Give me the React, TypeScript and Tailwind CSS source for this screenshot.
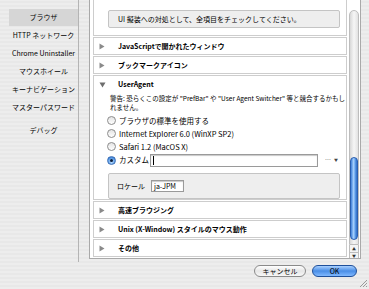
const font = "font-['Noto_Sans_CJK_JP','Noto_Sans',sans-serif]"

function TriRight() {
  return (
    <svg width="6" height="7" viewBox="0 0 6 7" className="shrink-0">
      <path d="M0.5 0.5 L5.5 3.5 L0.5 6.5 Z" fill="#8a8a8a" />
    </svg>
  )
}

function TriDown() {
  return (
    <svg width="7" height="6" viewBox="0 0 7 6" className="shrink-0">
      <path d="M0.5 0.5 L6.5 0.5 L3.5 5.5 Z" fill="#6e6e6e" />
    </svg>
  )
}

function Radio({ checked }: { checked?: boolean }) {
  if (checked) {
    return (
      <span className="flex h-[9px] w-[9px] shrink-0 items-center justify-center rounded-full border border-[#3b6fb6] bg-[radial-gradient(circle_at_50%_70%,#bfe0ff_0%,#5a9be6_60%,#2d6cc4_100%)]">
        <span className="h-[3px] w-[3px] rounded-full bg-[#0d1f3c]" />
      </span>
    )
  }
  return (
    <span className="h-[9px] w-[9px] shrink-0 rounded-full border border-[#8c8c8c] bg-[linear-gradient(180deg,#e4e4e4,#ffffff)]" />
  )
}

function Row({ label }: { label: string }) {
  return (
    <div className="flex h-[18px] items-center border border-[#cdcdcd] bg-white pl-[5px]">
      <TriRight />
      <span className="ml-[13px] whitespace-nowrap text-[7px] font-bold leading-none">{label}</span>
    </div>
  )
}

const sideItems = ['HTTP ネットワーク', 'Chrome Uninstaller', 'マウスホイール', 'キーナビゲーション', 'マスターパスワード']

export default function App() {
  return (
    <div
      className={`relative h-[289px] w-[369px] overflow-hidden bg-[#ececec] bg-[repeating-linear-gradient(0deg,#ededed_0px,#ededed_2px,#e8e8e8_2px,#e8e8e8_4px)] text-black ${font}`}
    >
      <div className="flex h-[262px]">
        {/* Sidebar */}
        <div className="flex w-[79px] shrink-0 flex-col border-r border-[#b4b4b4] pl-[9px] pt-[9px]">
          <div className="flex h-[17px] items-center justify-center bg-[#d6d6d6] text-[7px] leading-none">ブラウザ</div>
          {sideItems.map((s) => (
            <div key={s} className="flex h-[18px] items-center justify-center whitespace-nowrap text-[7px] leading-none">
              {s}
            </div>
          ))}
          <div className="mt-[5px] flex h-[18px] items-center justify-center text-[7px] leading-none">デバッグ</div>
        </div>

        {/* Main panel */}
        <div className="ml-[10px] flex h-[259px] w-[272px] border-x border-b border-[#a9a9a9] bg-white">
          <div className="flex w-[257px] shrink-0 flex-col gap-[1px] pl-[3px]">
            {/* partial top box */}
            <div className="h-[36px] border-x border-b border-[#cdcdcd] pl-[14px] pr-[6px] pt-[10px]">
              <div className="flex h-[18px] items-center whitespace-nowrap rounded-[2px] border border-[#c4c4c4] bg-[#eeeeee] pl-[9px] text-[7px] leading-none">
                UI 擬装への対処として、全項目をチェックしてください。
              </div>
            </div>
            <Row label="JavaScriptで開かれたウィンドウ" />
            <Row label="ブックマークアイコン" />

            {/* UserAgent */}
            <div className="h-[125px] border border-[#cdcdcd] bg-white">
              <div className="flex h-[17px] items-center pl-[5px]">
                <TriDown />
                <span className="ml-[12px] text-[7px] font-bold leading-none">UserAgent</span>
              </div>
              <div className="whitespace-nowrap pl-[16px] pt-[1px] text-[6.5px] leading-[9px]">
                警告: 恐らくこの設定が "PrefBar" や "User Agent Switcher" 等と競合するかもし
                <br />
                れません。
              </div>
              <div className="flex flex-col pl-[13px] pt-[2px] text-[7.5px] leading-none">
                <div className="flex h-[13px] items-center">
                  <Radio />
                  <span className="ml-[3px] whitespace-nowrap">ブラウザの標準を使用する</span>
                </div>
                <div className="flex h-[13px] items-center">
                  <Radio />
                  <span className="ml-[3px] whitespace-nowrap">Internet Explorer 6.0 (WinXP SP2)</span>
                </div>
                <div className="flex h-[13px] items-center">
                  <Radio />
                  <span className="ml-[3px] whitespace-nowrap">Safari 1.2 (MacOS X)</span>
                </div>
                <div className="flex h-[14px] items-center">
                  <Radio checked />
                  <span className="ml-[3px] w-[31px] whitespace-nowrap">カスタム</span>
                  <div className="flex h-[13px] w-[168px] shrink-0 items-center border border-[#9a9a9a] bg-white pl-[2px] shadow-[inset_0_1px_1px_#c8c8c8]">
                    <span className="h-[9px] w-px bg-black" />
                  </div>
                  <span className="ml-[7px] text-[6px] leading-none text-[#444]">…</span>
                  <span className="ml-[3px] text-[4px] leading-none text-[#444]">▼</span>
                </div>
              </div>
              <div className="ml-[14px] mr-[6px] mt-[6px] flex h-[26px] items-center rounded-[2px] border border-[#c4c4c4] bg-[#eeeeee] pl-[8px] text-[7px] leading-none">
                <span className="w-[34px] shrink-0 whitespace-nowrap">ロケール</span>
                <div className="flex h-[12px] w-[33px] shrink-0 items-center whitespace-nowrap border border-[#9a9a9a] bg-white pl-[2px] shadow-[inset_0_1px_1px_#c8c8c8]">
                  ja-JPM
                </div>
              </div>
            </div>

            <Row label="高速ブラウジング" />
            <Row label="Unix (X-Window) スタイルのマウス動作" />
            <Row label="その他" />
          </div>

          {/* Scrollbar */}
          <div className="ml-[2px] mt-[10px] flex h-[248px] w-[10px] shrink-0 flex-col">
            <div className="relative flex-1 rounded-t-[5px] border border-[#bdbdbd] bg-[linear-gradient(90deg,#d8d8d8,#f6f6f6_50%,#e2e2e2)]">
              <div className="absolute left-0 right-0 top-[146px] h-[83px] rounded-[5px] border border-[#2a5fb0] bg-[linear-gradient(90deg,#3f7fd8,#a9d3ff_45%,#5c9ce8_70%,#2f6cc6)]" />
            </div>
            <div className="flex h-[7px] items-center justify-center border-x border-[#bdbdbd] bg-[#f4f4f4]">
              <span className="text-[4px] leading-none text-[#333]">▲</span>
            </div>
            <div className="flex h-[6px] items-center justify-center border-x border-t border-[#bdbdbd] bg-[#f4f4f4]">
              <span className="text-[4px] leading-none text-[#333]">▼</span>
            </div>
          </div>
        </div>
      </div>

      {/* Buttons */}
      <div className="mt-[3px] flex justify-end gap-[6px] pr-[12px]">
        <button className="flex h-[12px] w-[52px] items-center justify-center rounded-full border border-[#8a8a8a] bg-[linear-gradient(180deg,#ffffff,#e6e6e6_50%,#f8f8f8)] text-[7px] leading-none">
          キャンセル
        </button>
        <button className="flex h-[12px] w-[45px] items-center justify-center rounded-full border border-[#1e4f9a] bg-[linear-gradient(180deg,#a8d0ff,#4a8ee6_50%,#7fb8ff)] text-[7px] leading-none">
          OK
        </button>
      </div>

      {/* resize grip */}
      <svg width="10" height="10" viewBox="0 0 10 10" className="absolute bottom-[1px] right-[1px]">
        <path d="M9 2 L2 9 M9 5 L5 9 M9 8 L8 9" stroke="#9a9a9a" strokeWidth="1" />
      </svg>
    </div>
  )
}
